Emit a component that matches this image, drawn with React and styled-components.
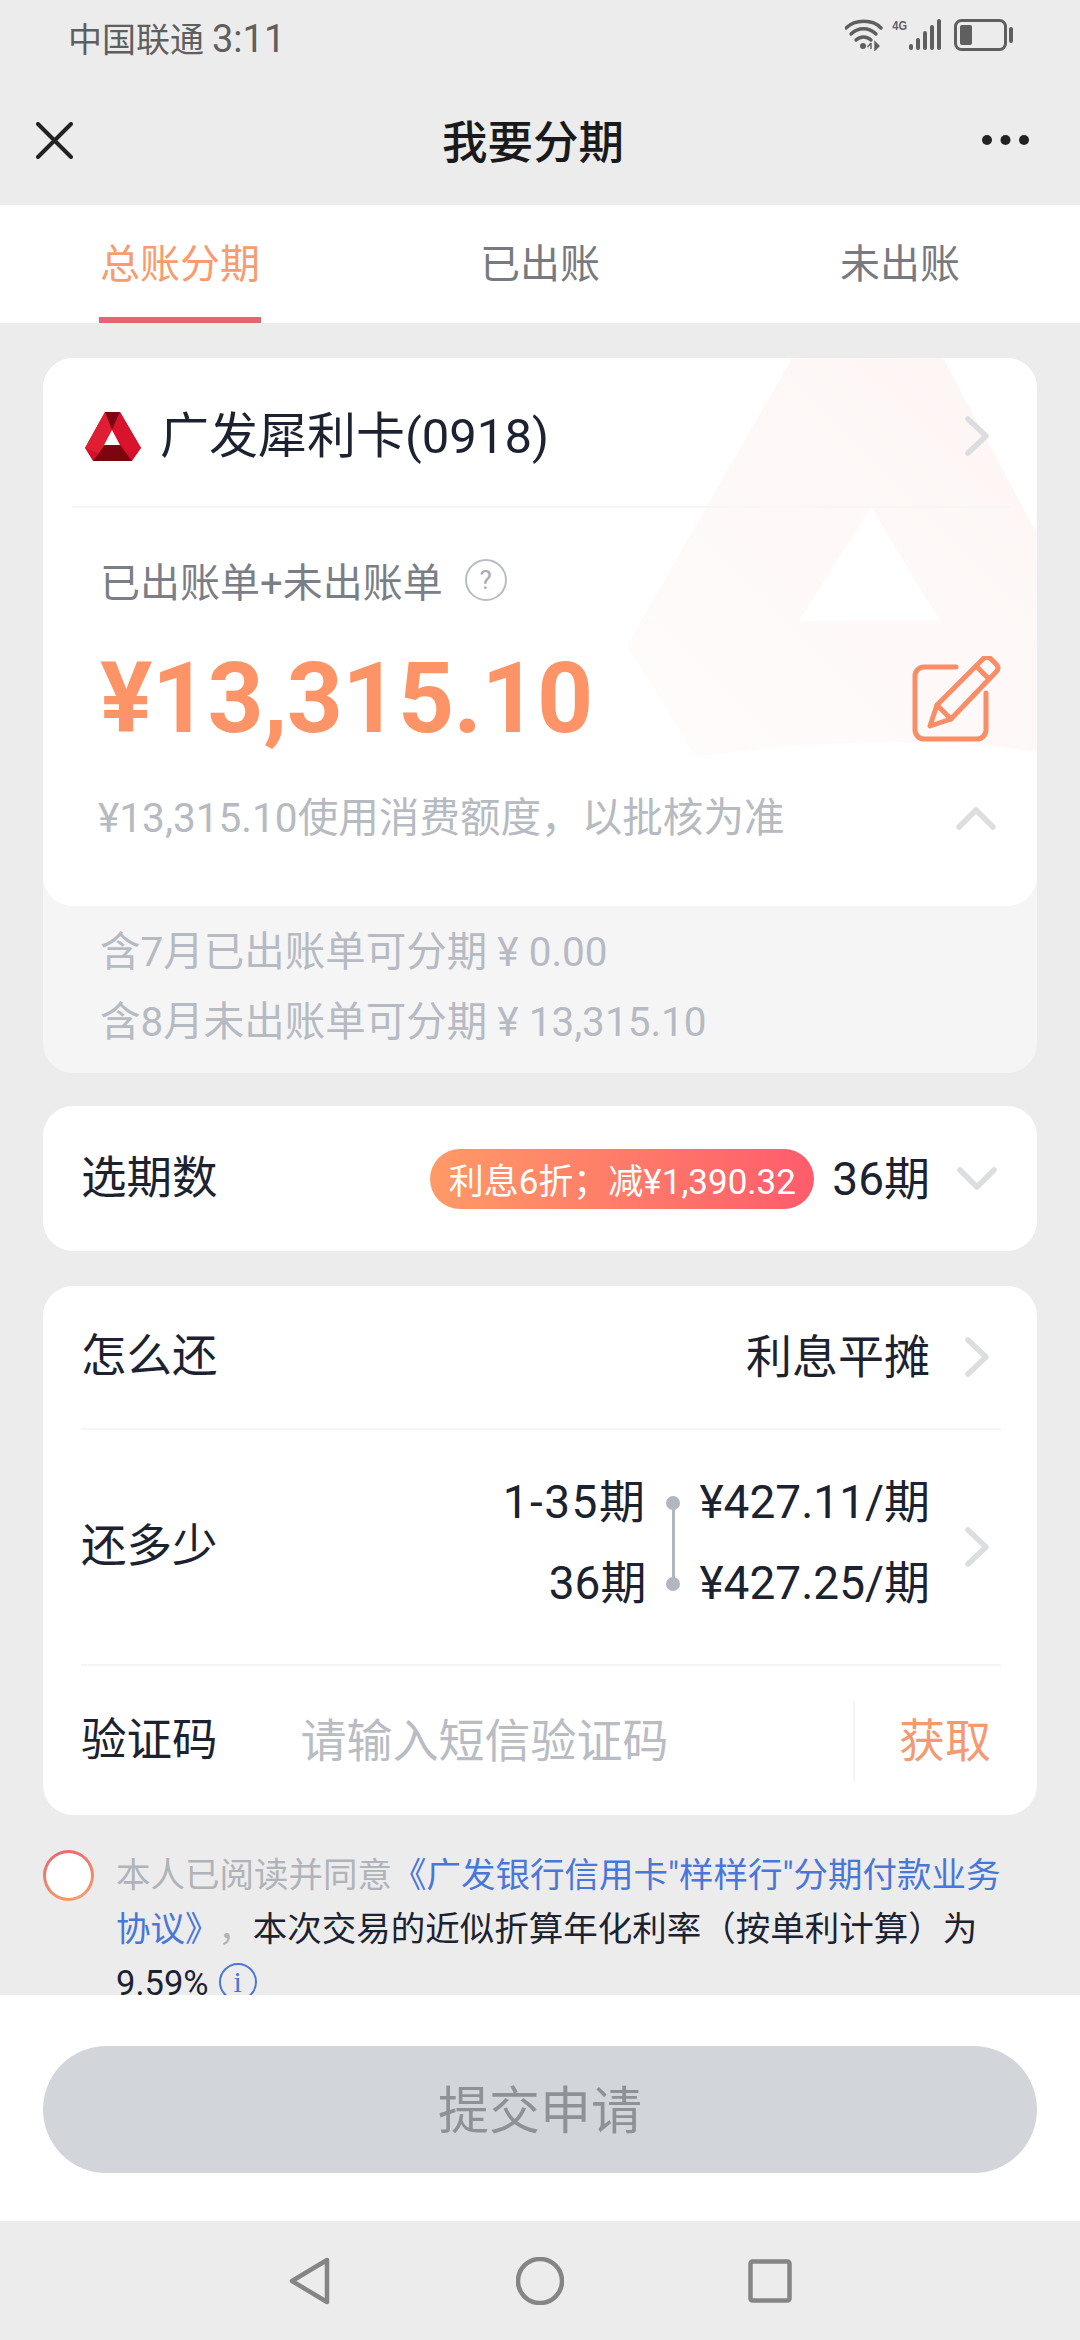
import React from "react";
import styled, { createGlobalStyle } from "styled-components";

const Global = createGlobalStyle`
  html, body { margin: 0; padding: 0; background: #ececec; }
  * { box-sizing: border-box; }
  body { font-family: Roboto, "Noto Sans CJK SC", sans-serif; color: #1c2230; }
`;

const Page = styled.div`
  width: 1080px; height: 2340px; display: flex; flex-direction: column; overflow: hidden; background: #ececec;
`;
const StatusBar = styled.div`
  height: 80px; flex: none; display: flex; justify-content: space-between; align-items: center;
  padding: 0 66px 6px 68px; color: #5f5f5f; font-size: 34px;
`;
const StatusTime = styled.span`font-size: 38px; margin-left: 8px;`;
const StatusIcons = styled.div`display: flex; align-items: flex-start; height: 32px; margin-top: -5px;`;
const FourG = styled.span`
  font: 700 13px/14px "Liberation Sans", sans-serif; width: 17px; margin-left: 6px; color: #5f5f5f; transform: scaleX(.85);
`;
const NavBar = styled.div`
  height: 125px; flex: none; display: grid; grid-template-columns: 1fr auto 1fr; align-items: center;
  padding: 0 50px 0 36px;
`;
const NavTitle = styled.div`font-size: 45.5px; font-weight: 500; color: #1a1a1a; line-height: 1; margin-top: 2px;`;
const NavMore = styled.svg`justify-self: end; display: block; margin-top: -6px;`;
const NavClose = styled.svg`display: block; margin-top: -4px;`;

const Tabs = styled.div`
  height: 118px; flex: none; background: #fff; display: grid; grid-template-columns: repeat(3, 1fr);
`;
const Tab = styled.div`
  position: relative; display: flex; align-items: center; justify-content: center;
  font-size: 40px; padding-bottom: 6px;
  color: ${p => (p.$active ? "#f79c6e" : "#777a7e")};
  &::after {
    content: ""; display: ${p => (p.$active ? "block" : "none")}; position: absolute; bottom: 0; left: 99px; width: 162px; height: 6px; background: #e7636f;
  }
`;

const Content = styled.div`
  flex: 1; min-height: 0; overflow: hidden; padding: 35px 43px 0 43px;
  display: flex; flex-direction: column;
`;

const AmountShell = styled.section`
  flex: none; height: 715px; border-radius: 30px; background: #f5f5f6;
`;
const AmountCard = styled.div`
  position: relative; height: 548px; background: #fff; border-radius: 30px; overflow: hidden;
`;
const Watermark = styled.svg`position: absolute; inset: 0; display: block;`;
const CardHead = styled.div`
  position: relative; height: 150px; margin: 0 27px 0 29px; padding: 8px 21px 0 13px; display: flex; align-items: center;
  border-bottom: 2px solid #f6f6f6;
`;
const LogoMark = styled.svg`display: block; flex: none; margin-top: 2px;`;
const CardName = styled.div`font-size: 49px; margin-left: 19px; flex: 1; color: #1c2230; line-height: 1;`;
const AmountBody = styled.div`position: relative; padding: 49px 41px 0 57px;`;
const AmountLabelRow = styled.div`display: flex; align-items: center; height: 46px; font-size: 40px; color: #7a7e87; gap: 22px;`;
const HelpDot = styled.span`
  width: 42px; height: 42px; border: 2px solid #b9bcc2; border-radius: 50%; display: flex; align-items: center; justify-content: center;
  font-size: 26px; color: #a8abb2;
`;
const AmountRow = styled.div`display: flex; align-items: center; justify-content: space-between; margin-top: 44px; height: 104px;`;
const AmountValue = styled.div`font-size: 98px; font-weight: 700; color: #fd9467; line-height: 1; letter-spacing: -.6px;`;
const EditIcon = styled.svg`display: block; margin-right: -19px;`;
const AmountNote = styled.div`
  display: flex; align-items: center; justify-content: space-between; margin-top: 39px; height: 48px;
  font-size: 40.6px; color: #b6bac1; margin-left: -2px;
`;
const Breakdown = styled.div`padding: 7px 0 0 57px;`;
const BreakdownLine = styled.div`height: 70px; display: flex; align-items: center; font-size: 40.5px; color: #b6bac2;`;

const Card = styled.section`
  flex: none; margin-top: ${p => p.$top}px; background: #fff; border-radius: 30px; padding: 0 36px 0 38px;
`;
const Row = styled.div`
  height: ${p => p.$h}px; display: flex; align-items: center;
  border-bottom: ${p => (p.$line ? "2px solid #f6f6f6" : "none")};
`;
const Label = styled.div`font-size: 45.5px; color: #1c2230; flex: none; line-height: 1;`;
const Spacer = styled.div`flex: 1;`;
const Pill = styled.div`
  height: 60px; width: 384px; border-radius: 30px; background: linear-gradient(90deg, #ff9a66, #fe5c6c);
  color: #fff; font-size: 35px; display: flex; align-items: center; justify-content: center; white-space: nowrap; margin-right: 18px;
`;
const Value = styled.div`font-size: 46px; color: #1c2230; line-height: 1; white-space: nowrap;`;
const ChevronBox = styled.svg`
  display: block; flex: none; margin-left: ${p => p.$ml}px; margin-right: ${p => p.$mr}px; margin-top: ${p => p.$mt}px;
`;

const PlanGrid = styled.div`display: grid; grid-template-columns: auto 53px auto; margin-bottom: 18px;`;
const PlanCell = styled.div`
  height: 81px; display: flex; align-items: center; justify-content: ${p => (p.$right ? "flex-end" : "flex-start")};
  font-size: 46px; color: #1c2230; white-space: nowrap; letter-spacing: ${p => p.$spread ?? 0}px;
`;
const Track = styled.div`
  grid-column: 2; grid-row: 1 / span 2; position: relative;
  &::before {
    content: ""; position: absolute; left: 25.5px; top: 47px; width: 3px; height: 81px; background: #b2b6bf;
  }
`;
const Dot = styled.span`
  position: absolute; left: 20px; top: ${p => p.$top}px; width: 14px; height: 14px; border-radius: 50%; background: #b2b6bf;
`;
const CodeInput = styled.div`font-size: 46px; color: #b9bcc3; margin-left: 83px; flex: 1; line-height: 1;`;
const CodeSep = styled.div`width: 2px; height: 80px; background: #f3f3f4;`;
const GetCode = styled.div`font-size: 46px; color: #f49a72; margin: 0 10px 0 44px; line-height: 1;`;

const Agreement = styled.div`display: flex; margin-top: 35px; align-items: flex-start;`;
const CheckRing = styled.div`
  flex: none; width: 51px; height: 51px; border-radius: 50%; padding: 3px; margin-right: 22px;
  background: linear-gradient(160deg, #e5646f, #f6a26f);
  &::after { content: ""; display: block; width: 100%; height: 100%; border-radius: 50%; background: #fff; }
`;
const AgreeText = styled.div`font-size: 34.5px; line-height: 54px; color: #1c2230; margin-top: -2px; width: 895px;`;
const Muted = styled.span`color: #b0b3ba; padding-left: ${p => p.$pad ?? 0}px;`;
const LinkText = styled.span`color: #4a76d8;`;
const InfoMark = styled.span`
  display: inline-flex; align-items: center; justify-content: center; width: 38px; height: 38px; margin-left: 10px; vertical-align: 3px;
  border: 2px solid #4a76d8; border-radius: 50%; color: #4a76d8; font: 30px/1 "Liberation Serif", serif;
`;

const Footer = styled.div`
  height: 226px; flex: none; background: #fff; padding: 51px 43px 0 43px;
`;
const Submit = styled.button`
  display: flex; align-items: center; justify-content: center; width: 100%; height: 127px; border: none; border-radius: 64px;
  background: #d2d5da; color: #8e9196; font: 51px Roboto, "Noto Sans CJK SC", sans-serif; padding: 0 0 6px;
`;
const SysNav = styled.div`
  height: 119px; flex: none; display: grid; grid-template-columns: repeat(3, 230px); justify-content: center; justify-items: center; align-items: center;
`;
const SysIcon = styled.svg`display: block;`;

const Chevron = ({ dir = "right", ml = 0, mr = 0, mt = 0 }) => {
  const vertical = dir !== "right";
  const d = dir === "right" ? "M3 3 L21 20 L3 37" : dir === "up" ? "M3 21 L20 4 L37 21" : "M3 3 L20 20 L37 3";
  return (
    <ChevronBox $ml={ml} $mr={mr} $mt={mt} width={vertical ? 40 : 24} height={vertical ? 24 : 40} viewBox={vertical ? "0 0 40 24" : "0 0 24 40"} fill="none">
      <path d={d} stroke="#dcdddf" strokeWidth="5.5" strokeLinecap="round" strokeLinejoin="round" />
    </ChevronBox>
  );
};

const Logo = () => (
  <LogoMark width="56" height="50" viewBox="0 0 56 50">
    <polygon points="20,0 35,0 56,36 47,49 8,49 0,36" fill="#d5102a" />
    <polygon points="20,0 35,0 27,18" fill="#7c0410" />
    <polygon points="0,36 20,0 27,18 14,42" fill="#e01e33" />
    <polygon points="35,0 56,36 42,42 27,18" fill="#d8132b" />
    <polygon points="8,49 20,33 35,33 47,49" fill="#7d0411" />
    <polygon points="27,18 19,33 35,33" fill="#fff" />
  </LogoMark>
);

export default function App() {
  return (
    <Page>
      <Global />
      <StatusBar>
        <span>中国联通<StatusTime>3:11</StatusTime></span>
        <StatusIcons>
          <svg width="40" height="32" viewBox="0 0 40 32" fill="none" style={{ display: "block" }}>
            <path d="M1 9 C10 0 28 0 36 9" stroke="#5f5f5f" strokeWidth="3.4" strokeLinecap="round" />
            <path d="M6 15 C13 8 24 8 31 15" stroke="#5f5f5f" strokeWidth="3.4" strokeLinecap="round" />
            <path d="M11 21 C15 17 22 17 26 21" stroke="#5f5f5f" strokeWidth="3.4" strokeLinecap="round" />
            <circle cx="18" cy="27" r="3" fill="#5f5f5f" />
            <path d="M26 24 L26 30 M22.5 28 L26 24 M30 23 V31 L34 27 Z" stroke="#5f5f5f" strokeWidth="1.4" fill="#5f5f5f" />
          </svg>
          <FourG>4G</FourG>
          <svg width="34" height="32" viewBox="0 0 34 32" style={{ display: "block", marginRight: 12 }}>
            <rect x="1" y="25" width="4" height="6" rx="2" fill="#5f5f5f" />
            <rect x="8" y="19" width="4" height="12" rx="2" fill="#5f5f5f" />
            <rect x="15" y="12" width="4" height="19" rx="2" fill="#5f5f5f" />
            <rect x="22" y="6" width="4" height="25" rx="2" fill="#5f5f5f" />
            <rect x="29" y="0" width="4" height="31" rx="2" fill="#5f5f5f" />
          </svg>
          <svg width="60" height="32" viewBox="0 0 60 32" style={{ display: "block" }}>
            <rect x="1.5" y="1.5" width="50" height="29" rx="6" fill="none" stroke="#5f5f5f" strokeWidth="3" />
            <rect x="6" y="6" width="12" height="20" rx="2" fill="#5f5f5f" />
            <rect x="55" y="8" width="4" height="16" rx="2" fill="#5f5f5f" />
          </svg>
        </StatusIcons>
      </StatusBar>
      <NavBar>
        <NavClose width="37" height="37" viewBox="0 0 37 37">
          <path d="M2 2 L35 35 M35 2 L2 35" stroke="#222" strokeWidth="4" strokeLinecap="round" />
        </NavClose>
        <NavTitle>我要分期</NavTitle>
        <NavMore width="49" height="12" viewBox="0 0 49 12">
          <circle cx="6" cy="6" r="5" fill="#222" />
          <circle cx="24.5" cy="6" r="5" fill="#222" />
          <circle cx="43" cy="6" r="5" fill="#222" />
        </NavMore>
      </NavBar>
      <Tabs>
        <Tab $active>总账分期</Tab>
        <Tab>已出账</Tab>
        <Tab>未出账</Tab>
      </Tabs>
      <Content>
        <AmountShell>
          <AmountCard>
            <Watermark width="994" height="548" viewBox="0 0 994 548">
              <defs>
                <linearGradient id="markFade" x1="0" y1="1" x2="1" y2="0">
                  <stop offset="0" stopColor="#fffcfc" />
                  <stop offset="1" stopColor="#fdf5f4" />
                </linearGradient>
              </defs>
              <path fillRule="evenodd" fill="url(#markFade)" d="M749 0 L900 0 L994 176 L994 394 Q850 372 652 399 L584 287 Z M828 149 L756 263 L897 263 Z" />
            </Watermark>
            <CardHead>
              <Logo />
              <CardName>广发犀利卡(0918)</CardName>
              <Chevron />
            </CardHead>
            <AmountBody>
              <AmountLabelRow>
                <span>已出账单+未出账单</span>
                <HelpDot>?</HelpDot>
              </AmountLabelRow>
              <AmountRow>
                <AmountValue>¥13,315.10</AmountValue>
                <EditIcon width="107" height="87" viewBox="0 0 107 87" fill="none">
                  <g transform="translate(-28 -27)" stroke="#f98e66" strokeWidth="5" strokeLinecap="round" strokeLinejoin="round">
                    <path d="M76 38 H44 a9 9 0 0 0 -9 9 V101 a9 9 0 0 0 9 9 H97 a9 9 0 0 0 9 -9 V64" />
                    <path d="M50 97 L57 76 L103 30 Q107 26 111 30 L116 35 Q120 39 116 43 L71 90 Z" />
                    <path d="M96 37 L109 50 M57 76 L71 90" />
                  </g>
                </EditIcon>
              </AmountRow>
              <AmountNote>
                <span>¥13,315.10使用消费额度，以批核为准</span>
                <Chevron dir="up" mt={8} />
              </AmountNote>
            </AmountBody>
          </AmountCard>
          <Breakdown>
            <BreakdownLine>含7月已出账单可分期 ¥ 0.00</BreakdownLine>
            <BreakdownLine>含8月未出账单可分期 ¥ 13,315.10</BreakdownLine>
          </Breakdown>
        </AmountShell>

        <Card $top={33}>
          <Row $h={145}>
            <Label>选期数</Label>
            <Spacer />
            <Pill>利息6折；减¥1,390.32</Pill>
            <Value>36期</Value>
            <Chevron dir="down" ml={27} mr={4} />
          </Row>
        </Card>

        <Card $top={35}>
          <Row $h={144} $line>
            <Label>怎么还</Label>
            <Spacer />
            <Value>利息平摊</Value>
            <Chevron ml={35} mr={12} />
          </Row>
          <Row $h={236} $line>
            <Label>还多少</Label>
            <Spacer />
            <PlanGrid>
              <PlanCell $right $spread={1.5}>1-35期</PlanCell>
              <Track>
                <Dot $top={39} />
                <Dot $top={120} />
              </Track>
              <PlanCell>¥427.11/期</PlanCell>
              <PlanCell $right>36期</PlanCell>
              <PlanCell>¥427.25/期</PlanCell>
            </PlanGrid>
            <Chevron ml={35} mr={12} />
          </Row>
          <Row $h={149}>
            <Label>验证码</Label>
            <CodeInput>请输入短信验证码</CodeInput>
            <CodeSep />
            <GetCode>获取</GetCode>
          </Row>
        </Card>

        <Agreement>
          <CheckRing />
          <AgreeText>
            <Muted>本人已阅读并同意</Muted>
            <LinkText>《广发银行信用卡"样样行"分期付款业务协议》</LinkText>
            <Muted $pad={16}>，</Muted>
            本次交易的近似折算年化利率（按单利计算）为9.59%
            <InfoMark>i</InfoMark>
          </AgreeText>
        </Agreement>
      </Content>
      <Footer>
        <Submit>提交申请</Submit>
      </Footer>
      <SysNav>
        <SysIcon width="42" height="48" viewBox="0 0 42 48" fill="none">
          <path d="M38 3 L3 24 L38 45 Z" stroke="#858585" strokeWidth="4.5" strokeLinejoin="round" />
        </SysIcon>
        <SysIcon width="48" height="48" viewBox="0 0 48 48" fill="none">
          <circle cx="24" cy="24" r="22" stroke="#858585" strokeWidth="4.5" />
        </SysIcon>
        <SysIcon width="44" height="44" viewBox="0 0 44 44" fill="none">
          <rect x="2.5" y="2.5" width="39" height="39" rx="2" stroke="#858585" strokeWidth="4.5" />
        </SysIcon>
      </SysNav>
    </Page>
  );
}
